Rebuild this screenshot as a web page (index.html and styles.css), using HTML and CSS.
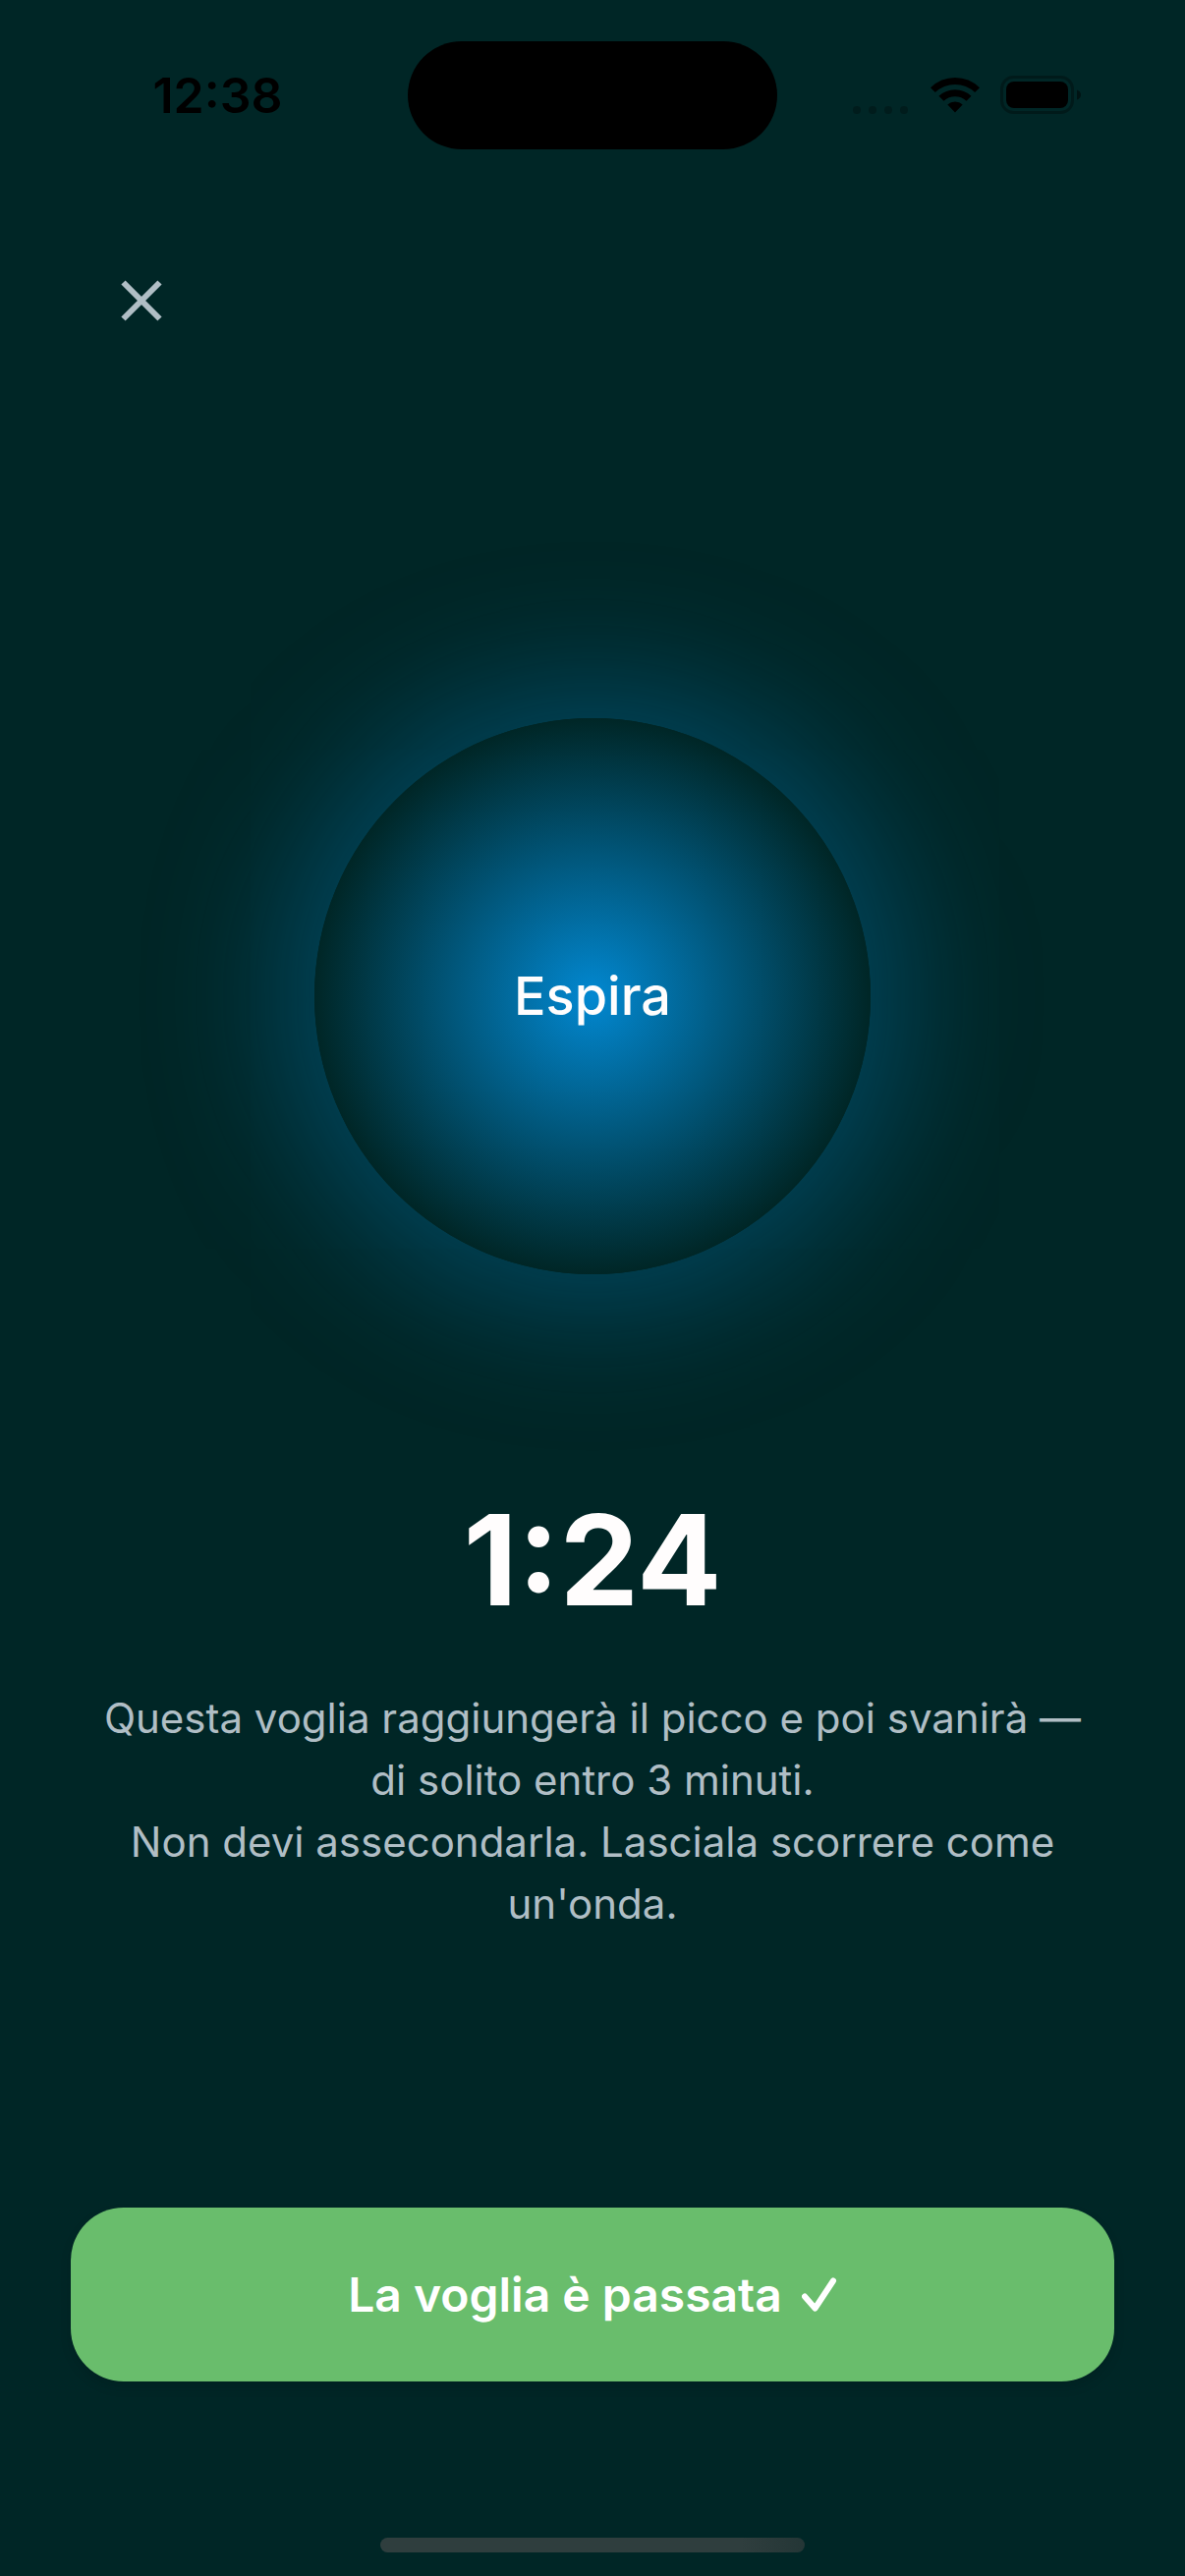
FILE: index.html
```html
<!DOCTYPE html>
<html lang="it">

<head>
  <meta charset="UTF-8" />
  <meta name="viewport" content="width=device-width, initial-scale=1.0" />
  <title>Respira</title>
  <link rel="stylesheet" href="styles.css">
</head>

<body>

  <header class="status-bar">
    <span class="status-time">12:38</span>
    <span class="island"></span>
    <div class="status-icons">
      <svg class="signal" width="60" height="10" viewBox="0 0 60 10" aria-hidden="true">
        <circle cx="6" cy="5" r="4" />
        <circle cx="22" cy="5" r="4" />
        <circle cx="38" cy="5" r="4" />
        <circle cx="54" cy="5" r="4" />
      </svg>
      <svg class="wifi" width="52" height="38" viewBox="0 0 52 38" aria-hidden="true">
        <path d="M1 11.2Q11.500 1 26 1T51 11.200L46.200 16Q37.500 8 26 8T5.800 16Z" />
        <path d="M9.500 19.700Q16.500 13.200 26 13.200T42.500 19.700L37.500 24.700Q32.500 20.300 26 20.300T14.500 24.700Z" />
        <path d="M18.300 28.400Q21.500 25.600 26 25.600T33.700 28.400L26 36.500Z" />
      </svg>
      <svg class="battery" width="82" height="40" viewBox="0 0 82 40" aria-hidden="true">
        <rect class="battery-case" x="1.500" y="1.500" width="72" height="36" rx="12" />
        <rect x="6" y="6" width="63" height="27" rx="8" />
        <path class="battery-tip" d="M78 14.500V24.500Q82 23 82 19.500T78 14.500Z" />
      </svg>
    </div>
  </header>

  <main class="screen">
    <button class="close-btn" type="button" aria-label="Chiudi">
      <svg width="42" height="42" viewBox="0 0 42 42" aria-hidden="true">
        <path d="M2.500 2.500L39.500 39.500M39.500 2.500L2.500 39.500" />
      </svg>
    </button>

    <div class="breath-area">
      <div class="breath-circle">Espira</div>
    </div>

    <div class="timer">1:24</div>

    <p class="message">
      Questa voglia raggiungerà il picco e poi svanirà — di solito entro 3 minuti.<br>
      Non devi assecondarla. Lasciala scorrere come un'onda.
    </p>

    <button class="done-btn" type="button">
      La voglia è passata
      <svg width="36" height="36" viewBox="0 0 36 36" aria-hidden="true">
        <path d="M3 19.500L13.500 31.500L32 3.500" />
      </svg>
    </button>
  </main>

  <footer class="home-area">
    <div class="home-indicator"></div>
  </footer>

</body>

</html>
```

FILE: styles.css
```css
:root {
  --background: #002626;
  --glow: #0288d1;
  --text-color: #fffdfd;
  --muted-color: #b0bec5;
  --primary-color: #69bd6c;
}

* {
  box-sizing: border-box;
}

body {
  font-family: Inter, "Liberation Sans", sans-serif;
  background-color: var(--background);
  color: var(--text-color);
  margin: 0;
  min-height: 100vh;
  display: flex;
  flex-direction: column;
}

button {
  font-family: inherit;
  border: none;
  cursor: pointer;
}

/* Status bar */
.status-bar {
  display: grid;
  grid-template-columns: 1fr auto 1fr;
  align-items: center;
  height: 194px;
  color: #000;
}

.status-time {
  justify-self: center;
  padding-left: 28px;
  font-size: 50px;
  font-weight: 600;
}

.island {
  width: 376px;
  height: 110px;
  border-radius: 55px;
  background-color: #000;
}

.status-icons {
  justify-self: end;
  display: flex;
  align-items: center;
  gap: 20px;
  padding-right: 106px;
}

.signal {
  align-self: flex-end;
  opacity: 0.25;
}

.battery-case {
  fill: none;
  stroke: #000;
  stroke-width: 3;
  opacity: 0.3;
}

.battery-tip {
  opacity: 0.5;
}

/* Breathing screen */
.screen {
  flex: 1;
  display: flex;
  flex-direction: column;
  align-items: center;
  padding: 40px 72px 0;
}

.close-btn {
  align-self: flex-start;
  display: grid;
  place-items: center;
  width: 144px;
  height: 144px;
  padding: 0;
  background: none;
}

.close-btn svg {
  stroke: var(--muted-color);
  stroke-width: 6;
}

.breath-area {
  flex: 1;
  display: grid;
  place-items: center;
  padding-top: 138px;
}

.breath-circle {
  display: grid;
  place-items: center;
  width: 566px;
  height: 566px;
  border-radius: 50%;
  background: radial-gradient(closest-side, var(--glow), var(--background));
  box-shadow: 0 0 140px 30px rgba(2, 136, 209, 0.36);
  font-size: 54px;
  font-weight: 500;
}

.timer {
  font-size: 128px;
  font-weight: 700;
  line-height: 154px;
}

.message {
  margin: 52px 0 278px;
  padding: 0 20px;
  color: var(--muted-color);
  font-size: 42px;
  line-height: 63px;
  text-align: center;
}

.done-btn {
  display: flex;
  justify-content: center;
  align-items: center;
  gap: 20px;
  width: 100%;
  padding: 60px 24px;
  border-radius: 54px;
  background-color: var(--primary-color);
  box-shadow: 0 6px 12px rgba(0, 0, 0, 0.12);
  color: #fff;
  font-size: 48px;
  font-weight: 600;
  line-height: 57px;
}

.done-btn svg {
  fill: none;
  stroke: #fff;
  stroke-width: 6;
  stroke-linecap: round;
  stroke-linejoin: round;
}

.home-area {
  display: flex;
  justify-content: center;
  align-items: flex-end;
  height: 198px;
  padding-bottom: 24px;
}

.home-indicator {
  width: 432px;
  height: 15px;
  border-radius: 8px;
  background: linear-gradient(to right, #2f3e3e 85%, #243636);
}
```
